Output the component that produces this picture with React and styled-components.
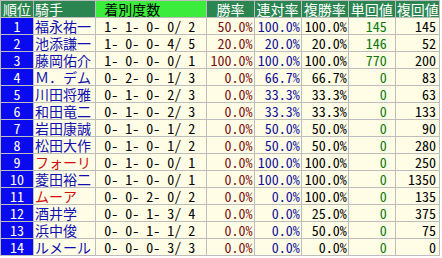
import React from "react";
import styled, { createGlobalStyle } from "styled-components";

const GlobalStyle = createGlobalStyle`
  html, body {
    margin: 0;
    padding: 0;
    background: #ffffff;
  }
  body {
    font-family: "Noto Sans Mono CJK JP", "Noto Sans CJK JP", monospace;
    font-size: 14px;
  }
`;

const Table = styled.table`
  border-collapse: separate;
  border-spacing: 1px;
  background: #bdbdbd;
  table-layout: fixed;
  width: 440px;
`;

const HeadCell = styled.th`
  height: 16px;
  padding: 0 1px;
  line-height: 16px;
  font-weight: normal;
  white-space: pre;
  overflow: hidden;
  text-align: ${(p) => (p.$center ? "center" : "left")};
  background: ${(p) => (p.$bright ? "#3cec3c" : "#2b8550")};
  color: ${(p) => (p.$bright ? "#000000" : "#ffffff")};
`;

const RankCell = styled.td`
  height: 16px;
  padding: 0;
  line-height: 16px;
  text-align: center;
  background: #0a0af0;
  color: #ffffff;
`;

const Cell = styled.td`
  height: 16px;
  padding: 0 ${(p) => p.$pad || 1}px 0 1px;
  line-height: 16px;
  white-space: pre;
  overflow: hidden;
  background: #fffde6;
  text-align: ${(p) => (p.$right ? "right" : "left")};
  color: ${(p) => p.$color || "#000000"};
`;

const rows = [
  ["福永祐一", false, [1, 1, 0, 0, 2], "50.0%", "100.0%", "100.0%", 145, 145],
  ["池添謙一", false, [1, 0, 0, 4, 5], "20.0%", "20.0%", "20.0%", 146, 52],
  ["藤岡佑介", false, [1, 0, 0, 0, 1], "100.0%", "100.0%", "100.0%", 770, 200],
  ["Ｍ．デム", false, [0, 2, 0, 1, 3], "0.0%", "66.7%", "66.7%", 0, 83],
  ["川田将雅", false, [0, 1, 0, 2, 3], "0.0%", "33.3%", "33.3%", 0, 63],
  ["和田竜二", false, [0, 1, 0, 2, 3], "0.0%", "33.3%", "33.3%", 0, 133],
  ["岩田康誠", false, [0, 1, 0, 1, 2], "0.0%", "50.0%", "50.0%", 0, 90],
  ["松田大作", false, [0, 1, 0, 1, 2], "0.0%", "50.0%", "50.0%", 0, 280],
  ["フォーリ", true, [0, 1, 0, 0, 1], "0.0%", "100.0%", "100.0%", 0, 250],
  ["菱田裕二", false, [0, 1, 0, 0, 1], "0.0%", "100.0%", "100.0%", 0, 1350],
  ["ムーア", true, [0, 0, 2, 0, 2], "0.0%", "0.0%", "100.0%", 0, 135],
  ["酒井学", false, [0, 0, 1, 3, 4], "0.0%", "0.0%", "25.0%", 0, 375],
  ["浜中俊", false, [0, 0, 1, 1, 2], "0.0%", "0.0%", "50.0%", 0, 75],
  ["ルメール", false, [0, 0, 0, 3, 3], "0.0%", "0.0%", "0.0%", 0, 0],
];

const pad2 = (n) => String(n).padStart(2, " ");
const record = ([a, b, c, d, t]) =>
  `${pad2(a)}-${pad2(b)}-${pad2(c)}-${pad2(d)}/${pad2(t)}`;

export default function App() {
  return (
    <>
      <GlobalStyle />
      <Table>
        <colgroup>
          <col style={{ width: 32 }} />
          <col style={{ width: 61 }} />
          <col style={{ width: 110 }} />
          <col style={{ width: 46 }} />
          <col style={{ width: 46 }} />
          <col style={{ width: 46 }} />
          <col style={{ width: 46 }} />
          <col style={{ width: 43 }} />
        </colgroup>
        <thead>
          <tr>
            <HeadCell $center>順位</HeadCell>
            <HeadCell>騎手</HeadCell>
            <HeadCell $bright> 着別度数</HeadCell>
            <HeadCell $center>勝率</HeadCell>
            <HeadCell $center>連対率</HeadCell>
            <HeadCell $center>複勝率</HeadCell>
            <HeadCell $center>単回値</HeadCell>
            <HeadCell $center>複回値</HeadCell>
          </tr>
        </thead>
        <tbody>
          {rows.map(([name, foreign, rec, win, ren, fuku, tan, fukuR], i) => (
            <tr key={name}>
              <RankCell>{i + 1}</RankCell>
              <Cell $color={foreign ? "#d01010" : "#1010b0"}>{name}</Cell>
              <Cell>{record(rec)}</Cell>
              <Cell $right $color="#7a1010">{win}</Cell>
              <Cell $right $color="#10109a">{ren}</Cell>
              <Cell $right>{fuku}</Cell>
              <Cell $right $pad={8} $color="#0a7a0a">{tan}</Cell>
              <Cell $right $pad={3}>{fukuR}</Cell>
            </tr>
          ))}
        </tbody>
      </Table>
    </>
  );
}
